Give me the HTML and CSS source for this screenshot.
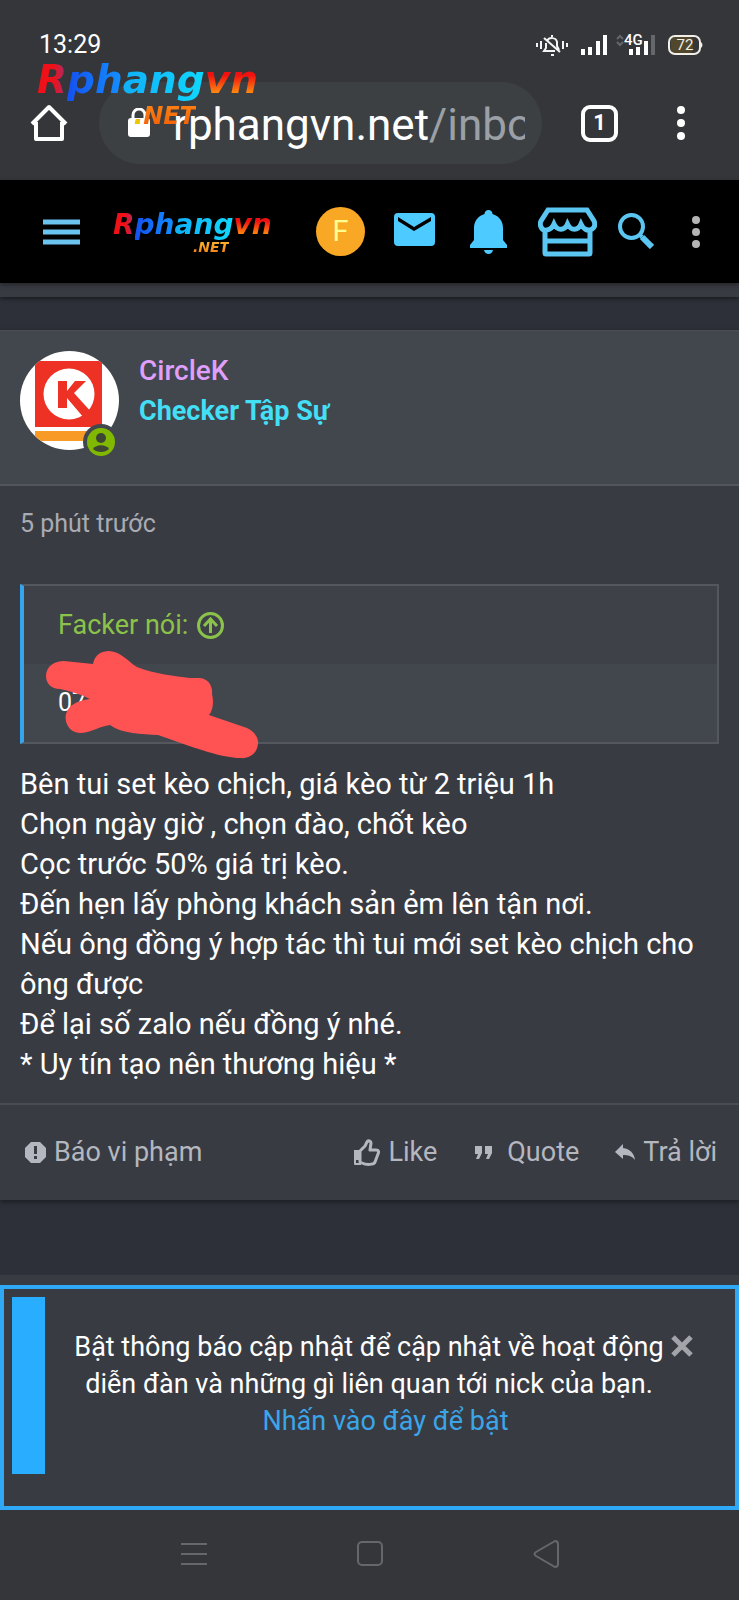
FILE: index.html
```html
<!DOCTYPE html>
<html lang="vi">
<head>
<meta charset="utf-8">
<meta name="viewport" content="width=device-width, initial-scale=1">
<title>Rphangvn.net</title>
<link rel="stylesheet" href="styles.css">
</head>
<body>
<header class="browser">
  <div class="status">
    <span class="clock">13:29</span>
    <div class="status-icons">
      <svg width="32" height="22" viewBox="0 0 32 22" fill="none" stroke="#f4f4f4" stroke-width="2">
        <path d="M1 9v4M5 7v8M27 7v8M31 9v4" />
        <path d="M16 1v2M15 21h3M11 7c2-4 9-4 10 1v4l2 4M10 9v5l-2 3h11M8 4l16 14" />
      </svg>
      <svg class="signal" width="28" height="22" viewBox="0 0 28 22" stroke="#fff" stroke-width="4">
        <path d="M3 21v-6M10 21v-8M18 21V7M25 21V1" />
      </svg>
      <svg class="mobile" width="40" height="22" viewBox="0 0 40 22">
        <path d="M1 5l3-3 3 3M1 8l3 3 3-3" fill="none" stroke="#66676a" stroke-width="2" />
        <text class="network" x="8" y="11">4G</text>
        <path d="M15 21v-6M22 21v-8M30 21V7" stroke="#fff" stroke-width="4" />
        <path d="M37 21V1" stroke="#66676a" stroke-width="4" />
      </svg>
      <svg width="36" height="22" viewBox="0 0 36 22">
        <rect x="3" y="3" width="22" height="16" rx="4" fill="#51472c" />
        <rect x="1" y="2" width="31" height="18" rx="6" fill="none" stroke="#f2efe6" stroke-width="2" />
        <path d="M33 8q3 3 0 6z" fill="#f2efe6" />
        <text class="battery" x="17" y="16" text-anchor="middle">72</text>
      </svg>
    </div>
  </div>
  <div class="toolbar">
    <button class="plain" type="button" aria-label="Home">
      <svg width="38" height="38" viewBox="0 0 38 38" fill="none" stroke="#fff" stroke-width="4" stroke-linejoin="round">
        <path d="M2 20L19 3l17 17M6 18v17h26V18" />
      </svg>
    </button>
    <div class="address">
      <svg width="22" height="30" viewBox="0 0 22 30">
        <path d="M5 12V7a6 6 0 0 1 12 0v5" fill="none" stroke="#fff" stroke-width="3" />
        <rect y="10" width="22" height="19" rx="3" fill="#fff" />
      </svg>
      <span class="url">rphangvn.net<span class="path">/inbox</span></span>
    </div>
    <button class="tabs" type="button" aria-label="Tabs">1</button>
    <button class="plain" type="button" aria-label="Menu">
      <svg width="10" height="36" viewBox="0 0 10 36" fill="#fff"><circle cx="5" cy="5" r="4" /><circle cx="5" cy="18" r="4" /><circle cx="5" cy="31" r="4" /></svg>
    </button>
  </div>
  <div class="logo watermark"><span class="word"><span class="c1">R</span><span class="c2">ph</span><span class="c3">ang</span><span class="c4">vn</span></span><span class="net"><span class="dot">.</span>NET</span></div>
</header>

<nav class="navbar">
  <button class="plain" type="button" aria-label="Menu">
    <svg width="37" height="26" viewBox="0 0 37 26" stroke="#6bc4f0" stroke-width="5"><path d="M0 3h37M0 13h37M0 23h37" /></svg>
  </button>
  <a class="logo small" href="#"><span class="word"><span class="c1">R</span><span class="c2">ph</span><span class="c3">ang</span><span class="c4">vn</span></span><span class="net">.NET</span></a>
  <div class="nav-icons">
    <a class="me" href="#">F</a>
    <a class="mail" href="#" aria-label="Mail"><svg width="41" height="33" viewBox="0 0 41 33"><path fill="#4dcaff" fill-rule="evenodd" d="M4 0h33q4 0 4 4v25q0 4-4 4H4q-4 0-4-4V4q0-4 4-4zM4 4v4l16 10L37 8V4L20 14z" /></svg></a>
    <a class="bell" href="#" aria-label="Alerts"><svg width="37" height="44" viewBox="0 0 37 44" fill="#4dcaff"><path d="M18.500 0c2.500 0 4 2 4 4C29 6 33 11 33 18v12l4 5v3H0v-3l4-5V18C4 11 8 6 14.500 4c0-2 1.500-4 4-4zM14 40h9q-1 4-4.500 4T14 40z" /></svg></a>
    <a class="store" href="#" aria-label="Store"><svg width="59" height="50" viewBox="0 0 59 50" fill="none" stroke="#5bc6f2" stroke-width="5"><path d="M10 3h39l7 11c3 7-4 11-9 8-2-1-3-3-4-5-3 7-10 7-13.500 0-3 7-10 7-13.500 0-3 7-11 8-13 3-1-2-1-4 0-6zM7 23v23q0 1 1 1h43q1 0 1-1V23M7 34h45" /></svg></a>
    <a class="search" href="#" aria-label="Search"><svg width="36" height="36" viewBox="0 0 36 36" fill="none" stroke="#5bc6f2"><circle cx="13.500" cy="13.500" r="11.500" stroke-width="4" /><path d="M21 21l3 3" stroke-width="4" /><path d="M24 24l10 10" stroke-width="6" /></svg></a>
    <button class="plain more" type="button" aria-label="More"><svg width="8" height="34" viewBox="0 0 8 34" fill="#b4b4b4"><circle cx="4" cy="5" r="4" /><circle cx="4" cy="17" r="4" /><circle cx="4" cy="29" r="4" /></svg></button>
  </div>
</nav>

<main class="page">
  <div class="strip"></div>
  <article class="post">
    <header class="author">
      <div class="avatar">
        <svg width="99" height="99" viewBox="0 0 99 99" aria-label="CircleK">
          <defs><clipPath id="round"><circle cx="49.500" cy="49.500" r="49.500" /></clipPath></defs>
          <g clip-path="url(#round)">
            <path fill="#fff" d="M0 0h99v99H0z" />
            <path fill="#ed3124" d="M15 10h67v66H15z" />
            <path fill="#f79a26" d="M15 80h67v10H15z" />
            <circle cx="49" cy="43" r="25.500" fill="#fff" />
            <path fill="#ed3124" d="M38 30h9v10l8-10h11L54 42l19 21-9 4-17-20v10h-9z" />
          </g>
        </svg>
        <svg class="online" width="36" height="36" viewBox="0 0 36 36">
          <circle cx="18" cy="18" r="18" fill="#42464d" />
          <circle cx="18" cy="18" r="14" fill="#80b900" />
          <circle cx="18" cy="14" r="5" fill="#3c4633" />
          <path fill="#3c4633" d="M10 25c3-5 13-5 16 0-4 4-12 4-16 0z" />
        </svg>
      </div>
      <div class="who">
        <a class="name" href="#">CircleK</a>
        <strong class="rank">Checker Tập Sự</strong>
      </div>
    </header>
    <div class="body">
      <time class="time">5 phút trước</time>
      <blockquote class="quote">
        <a class="quote-head" href="#">Facker nói:
          <svg width="27" height="27" viewBox="0 0 27 27" fill="none" stroke="#8bc34a" stroke-width="3"><circle cx="13.500" cy="13.500" r="12" /><path d="M13.500 21V7M7 14l6.500-7 6.500 7" /></svg>
        </a>
        <div class="quote-text">07</div>
        <svg class="scribble" width="220" height="112" viewBox="44 648 220 112">
          <path fill="#ff5252" d="M46 675C46 665 55 660 64 660L93 663C95 653 102 650 109 650C122 651 127 660 137 666C155 673 175 675 190 677H200C209 678 213 686 212 693C214 701 213 709 209 714L247 727C254 730 259 737 258 743C257 753 249 758 240 757C226 757 205 750 195 747L158 734C142 733 122 733 110 724C100 725 90 732 80 732C69 732 64 721 66 713C69 704 76 700 90 698C80 693 70 690 60 688C51 688 46 682 46 675Z" />
        </svg>
      </blockquote>
      <p class="message">Bên tui set kèo chịch, giá kèo từ 2 triệu 1h<br>Chọn ngày giờ , chọn đào, chốt kèo<br>Cọc trước 50% giá trị kèo.<br>Đến hẹn lấy phòng khách sản ẻm lên tận nơi.<br>Nếu ông đồng ý hợp tác thì tui mới set kèo chịch cho ông được<br>Để lại số zalo nếu đồng ý nhé.<br>* Uy tín tạo nên thương hiệu *</p>
    </div>
    <footer class="actions">
      <a class="report" href="#"><svg width="21" height="21" viewBox="0 0 21 21"><path fill="#b4b7bf" d="M6 0h9l6 6v9l-6 6H6l-6-6V6z" /><path stroke="#393b43" stroke-width="3" d="M10.500 4v8M10.500 14v3" /></svg>Báo vi phạm</a>
      <a href="#"><svg width="26" height="27" viewBox="0 0 26 27"><path fill="none" stroke="#b4b7bf" stroke-width="3" stroke-linejoin="round" d="M6 12l5-5 2-4c1-2 4-1 4 1l-1 7h6c3 0 3 2 2 4l-3 8c-1 3-9 3-13 1l-2-1z" /><path fill="#b4b7bf" fill-rule="evenodd" d="M0 11h7v15H1q-1 0-1-1zM2 21v3h3v-3z" /></svg>Like</a>
      <a class="cite" href="#"><svg width="17" height="13" viewBox="0 0 17 13" fill="#b4b7bf"><path d="M0 0h7v7l-3 6H1l2-5H0zM10 0h7v7l-3 6h-3l2-5h-3z" /></svg>Quote</a>
      <a class="reply" href="#"><svg width="20" height="16" viewBox="0 0 20 16" fill="#b4b7bf"><path d="M8 0v4c7 1 11 5 12 12-3-4-7-5-12-5v4L0 8z" /></svg>Trả lời</a>
    </footer>
  </article>
</main>

<aside class="notice">
  <div class="accent"></div>
  <p class="notice-text">Bật thông báo cập nhật để cập nhật về hoạt động diễn đàn và những gì liên quan tới nick của bạn.<br><a href="#">Nhấn vào đây để bật</a></p>
  <button class="plain close" type="button" aria-label="Close"><svg width="22" height="22" viewBox="0 0 22 22" stroke="#a2a4a9" stroke-width="5"><path d="M2 2l18 18M20 2L2 20" /></svg></button>
</aside>

<div class="system">
  <button class="plain" type="button" aria-label="Recent"><svg width="26" height="28" viewBox="0 0 26 28" fill="none" stroke="#66676a" stroke-width="2"><path d="M0 4h26M0 14h26M0 24h26" /></svg></button>
  <button class="plain" type="button" aria-label="Home"><svg width="26" height="28" viewBox="0 0 26 28" fill="none" stroke="#66676a" stroke-width="2"><rect x="1" y="2" width="24" height="23" rx="4" /></svg></button>
  <button class="plain" type="button" aria-label="Back"><svg width="26" height="28" viewBox="0 0 26 28" fill="none" stroke="#66676a" stroke-width="2"><path d="M22 1L3 12q-3 2 0 4l19 11q3 0 3-3V4q0-3-3-3z" /></svg></button>
</div>
</body>
</html>
```
FILE: styles.css
```css
* { box-sizing: border-box; }
body {
  margin: 0;
  min-height: 100vh;
  display: flex;
  flex-direction: column;
  background: #2d3038;
  color: #fff;
  font-family: Roboto, "Noto Sans", sans-serif;
  font-size: 27px;
}
a { color: inherit; text-decoration: none; }
svg { display: block; flex: none; }
.plain { border: 0; padding: 0; background: none; }

/* Browser chrome */
.browser { position: relative; background: #35363a; padding-bottom: 16px; }
.status {
  display: flex;
  justify-content: space-between;
  align-items: center;
  padding: 29px 35px 21px 39px;
}
.clock { font-size: 25px; line-height: 32px; }
.status-icons { display: flex; align-items: center; }
.signal { margin-left: 12px; }
.mobile { margin: 0 12px 0 8px; }
.network { font-size: 15px; font-weight: 500; fill: #fff; }
.battery { font-size: 15px; fill: #f2efe6; }
.toolbar { display: flex; align-items: center; padding: 0 53px 0 30px; }
.address {
  flex: 1;
  min-width: 0;
  height: 82px;
  margin: 0 39px 0 31px;
  padding: 0 17px 0 29px;
  display: flex;
  align-items: center;
  gap: 23px;
  border-radius: 41px;
  background: #3c4043;
}
.url {
  flex: 1;
  min-width: 0;
  padding-top: 4px;
  overflow: hidden;
  white-space: nowrap;
  font-size: 44px;
  line-height: 60px;
}
.path { color: #9aa0a6; }
.tabs {
  width: 37px;
  height: 37px;
  margin-right: 58px;
  padding: 0;
  border: 4px solid #fff;
  border-radius: 9px;
  background: none;
  color: #fff;
  font: 700 22px/28px Roboto, sans-serif;
}

/* Wordmark */
.logo {
  display: flex;
  flex-direction: column;
  font-family: "DejaVu Sans", sans-serif;
  font-weight: 700;
  font-style: italic;
}
.word span, .net { background-clip: text; -webkit-background-clip: text; color: transparent; }
.word .c1 { background-image: linear-gradient(90deg, #f01018 55%, #a03070); }
.word .c2 { background-image: linear-gradient(90deg, #1450f0, #1490ff); }
.word .c3 { background-image: linear-gradient(90deg, #10b0f8, #10d8ff); }
.word .c4 { background-image: linear-gradient(#f01010 40%, #ff8a10 80%); }
.net { background-image: linear-gradient(#ff8010, #f06008); }
.dot { color: #f0c800; }
.watermark { position: absolute; left: 37px; top: 56px; }
.watermark .word { font-size: 39px; line-height: 48px; }
.watermark .net { align-self: flex-start; margin-left: 97px; font-size: 24px; line-height: 24px; }
.small { margin-left: 33px; }
.small .word { font-size: 28px; line-height: 30px; }
.small .net { align-self: flex-start; margin-left: 80px; font-size: 14px; line-height: 14px; background-image: linear-gradient(#ffb830, #f08018); }

/* Site navigation */
.navbar {
  position: relative;
  display: flex;
  align-items: center;
  min-height: 103px;
  padding: 0 39px 0 43px;
  background: #000;
  box-shadow: 0 2px 5px rgba(0, 0, 0, .4);
}
.nav-icons { display: flex; align-items: center; margin-left: auto; }
.me {
  width: 49px;
  height: 49px;
  border-radius: 50%;
  background: #f9a825;
  color: #ffff8d;
  font-size: 29px;
  line-height: 48px;
  text-align: center;
}
.mail { margin-left: 29px; padding-bottom: 4px; }
.bell { margin-left: 35px; }
.store { margin-left: 31px; }
.search { margin-left: 21px; padding-bottom: 2px; }
.more { margin-left: 38px; }

/* Post */
.page { flex: 1; }
.strip { height: 14px; margin-bottom: 33px; background: #393b43; box-shadow: 0 2px 4px rgba(0, 0, 0, .4); }
.post { background: #393b43; box-shadow: 0 2px 5px rgba(0, 0, 0, .4); }
.author {
  display: flex;
  gap: 20px;
  padding: 20px 20px 34px;
  border-top: 1px solid #4a4d55;
  border-bottom: 2px solid #53565e;
  background: #42464d;
}
.avatar { position: relative; width: 99px; height: 99px; }
.online { position: absolute; left: 63px; top: 73px; }
.who { display: flex; flex-direction: column; line-height: 40px; }
.name { color: #df9ffb; font-size: 28px; font-weight: 500; }
.rank { color: #42dff5; }
.body { padding: 20px 20px 19px; }
.time { display: block; color: #a9abb3; font-size: 25px; line-height: 36px; }
.quote {
  position: relative;
  margin: 42px 0 20px;
  border: 2px solid #54575e;
  border-left: 4px solid #35a5ee;
  background: #42464d;
}
.quote-head {
  display: flex;
  align-items: center;
  gap: 9px;
  padding: 19px 34px;
  background: #3e4147;
  color: #8bc34a;
  line-height: 40px;
}
.quote-text { padding: 19px 34px; font-size: 25px; line-height: 40px; }
.scribble { position: absolute; left: 20px; top: 63px; }
.message { margin: 0; font-size: 29px; line-height: 40px; }
.actions {
  display: flex;
  align-items: center;
  padding: 29px 22px 30px 25px;
  border-top: 2px solid #494c54;
  color: #b4b7bf;
  line-height: 36px;
}
.actions a { display: flex; align-items: center; gap: 8px; }
.actions .report { margin-right: auto; }
.actions .cite { gap: 15px; margin: 0 36px 0 38px; }

/* Push notice */
.notice {
  display: flex;
  align-items: flex-start;
  padding: 8px 42px 32px 8px;
  border: 4px solid #2fa8f5;
  outline: 10px solid #393b43;
  background: #393b43;
}
.accent { align-self: stretch; width: 33px; min-height: 177px; background: #29adff; }
.notice-text {
  flex: 1;
  margin: 32px 2px 0 24px;
  text-align: center;
  line-height: 37px;
}
.notice-text a { padding-left: 33px; color: #3ba5e8; }
.close { margin-top: 38px; }

/* System bar */
.system {
  position: relative;
  display: flex;
  justify-content: center;
  gap: 150px;
  padding: 30px 0 32px;
  background: #35363a;
}
```
